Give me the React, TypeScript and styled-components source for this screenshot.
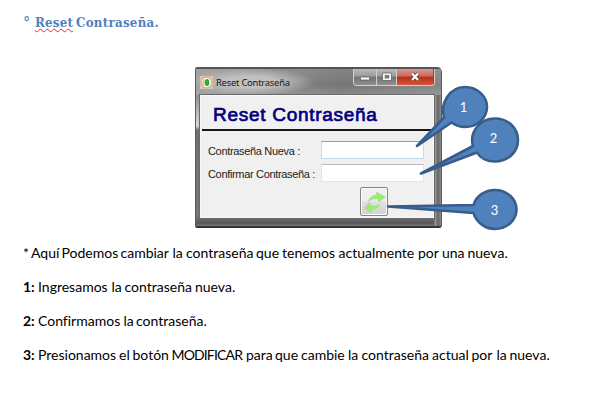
import React from "react";
import styled, { createGlobalStyle } from "styled-components";

const GlobalStyle = createGlobalStyle`
  * { box-sizing: border-box; }
  body { margin: 0; background: #fff; }
`;

const Page = styled.main`
  width: 597px;
  height: 415px;
  padding: 13px 0 0 23px;
  overflow: hidden;
  color: #000;
  font-family: Lato, "Liberation Sans", sans-serif;
`;

const Heading = styled.h1`
  display: flex;
  align-items: flex-start;
  height: 20px;
  margin: 0 0 34px;
  color: #4f81bd;
  font: bold 13.2px/19px "DejaVu Serif Condensed", "DejaVu Serif", serif;
  white-space: nowrap;
`;

const Degree = styled.span`
  width: 12px;
  font-size: 16px;
  font-weight: normal;
  line-height: 20px;
`;

const Misspelled = styled.span`
  width: 41px;
  height: 17px;
  letter-spacing: 0.2px;
  text-decoration: underline wavy #ff2020 1px;
  text-underline-offset: 1px;
  text-decoration-skip-ink: none;
`;

const HeadingRest = styled.span`
  letter-spacing: 0.25px;
`;

const Figure = styled.figure`
  position: relative;
  width: 330px;
  height: 172px;
  margin: 0 0 0 172px;
`;

const Window = styled.section`
  display: flex;
  flex-direction: column;
  width: 247px;
  height: 161px;
  padding: 0 7px 8px 4px;
  border: 1px solid #5c5c5c;
  border-top: 2px solid #555;
  border-bottom: 2px solid #333;
  border-radius: 2px 5px 3px 2px;
  background:
    linear-gradient(90deg, rgba(255, 255, 255, 0) 0 238px, #999 239px, #666 242px, #8b8b8b 245px) 0 0 / 100% 100%,
    linear-gradient(#858585 0, #777 14px, #8d8d8d 25px, #c5c5c5 48px, #d7d7d7 57px, #707070 61px, #777 147px, #575757 154px, #777 157px);
  font-family: "Liberation Sans", Arial, sans-serif;
`;

const TitleBar = styled.header`
  display: flex;
  height: 26px;
  flex: none;
  margin: 0 -7px 0 -4px;
  padding: 0 6px 0 4px;
  background:
    radial-gradient(ellipse 66px 14px at 54px 13px, rgba(195, 195, 195, 0.95) 40%, rgba(160, 160, 160, 0) 100%),
    linear-gradient(rgba(255, 255, 255, 0.1), rgba(0, 0, 0, 0) 60%, rgba(255, 255, 255, 0.15)),
    linear-gradient(90deg, #999, #757575 60%, #858585);
`;

const AppIcon = styled.svg`
  width: 13px;
  height: 13px;
  margin-top: 7px;
`;

const WindowName = styled.span`
  margin: 7px auto 0 3px;
  color: #171717;
  font: 9.4px/13px "Noto Sans", sans-serif;
  letter-spacing: -0.22px;
  white-space: nowrap;
`;

const Controls = styled.div`
  display: flex;
  width: 82px;
  height: 17px;
  border: 1px solid #d0d0d0;
  border-top: 0;
  border-radius: 0 0 4px 4px;
  overflow: hidden;
`;

const Control = styled.span<{ $width: number; $danger?: boolean }>`
  display: grid;
  place-items: center;
  width: ${(p) => p.$width}px;
  border-right: 1px solid ${(p) => (p.$danger ? "#8c4034" : "#cfcfcf")};
  background: ${(p) =>
    p.$danger
      ? "linear-gradient(#d29a90 0, #ca6c5c 45%, #b92d17 50%, #d4573c 100%)"
      : "linear-gradient(#b9b9b9 0, #9c9c9c 45%, #717171 50%, #919191 100%)"};
`;

const Glyph = styled.svg`
  width: 14px;
  height: 12px;
`;

const Client = styled.div`
  flex: 1;
  border: 1px solid #fafafa;
  outline: 1px solid #696969;
  background: #f0f0f0;
`;

const FormTitle = styled.h2`
  height: 35px;
  margin: 0 0 0 1px;
  padding: 7px 0 0 11px;
  border-bottom: 2px solid #19161b;
  color: #000080;
  font-size: 19px;
  font-weight: normal;
  -webkit-text-stroke: 0.7px #000080;
  line-height: 24px;
  letter-spacing: 0.72px;
  white-space: nowrap;
`;

const Form = styled.div`
  display: grid;
  grid-template-columns: 113px 103px;
  grid-template-rows: 18px 18px 28px;
  row-gap: 5px;
  padding: 10px 0 0 7px;
`;

const Label = styled.label`
  color: #222;
  font-size: 11px;
  line-height: 20px;
  letter-spacing: -0.33px;
  white-space: nowrap;
`;

const Field = styled.input<{ $active?: boolean }>`
  width: 103px;
  height: 18px;
  border: 1px solid ${(p) => (p.$active ? "#bddcf0" : "#e2e3ea")};
  border-top-color: ${(p) => (p.$active ? "#75a9d0" : "#b7b8be")};
  border-radius: 1px;
  background: #fff;
`;

const ModifyButton = styled.button`
  grid-column: 2;
  width: 28px;
  height: 29px;
  margin: 0 0 0 39px;
  padding: 1px;
  border: 1px solid #858585;
  border-radius: 2px;
  background: linear-gradient(#f0f0f0 45%, #e0e0e0 52%, #d2d2d2);
  box-shadow: inset 0 0 0 1px #fafafa;
`;

const ArrowsIcon = styled.svg`
  display: block;
  width: 24px;
  height: 24px;
`;

const Callouts = styled.svg`
  position: absolute;
  top: 0;
  left: 0;
  width: 330px;
  height: 172px;
  overflow: visible;
  fill: #4f81bd;
  stroke: #385d8a;
  stroke-width: 2.6;
  stroke-linejoin: round;
`;

const CalloutNumber = styled.text`
  fill: #fff;
  stroke: none;
  font: 13px Lato, sans-serif;
  text-anchor: middle;
`;

const Notes = styled.div`
  display: flex;
  flex-direction: column;
  gap: 14px;
  margin-top: 4px;
`;

const Note = styled.p`
  display: flex;
  margin: 0;
  font-size: 14px;
  line-height: 20px;
  font-variant-ligatures: none;
  white-space: pre;
`;

const Word = styled.span<{ $advance: number; $strong?: boolean; $tight?: boolean }>`
  flex: none;
  width: ${(p) => p.$advance}px;
  font-weight: ${(p) => (p.$strong ? "bold" : "normal")};
  letter-spacing: ${(p) => (p.$tight ? "-0.85px" : "0")};
`;

const callouts = [
  { n: 1, x: 463.5, y: 112, d: "M417 146 L444 117.5 C440 104 449 87 465 87 C477 87 487 96 487 107 C487 118 477 127 465 127 C460 127 455 125 451.5 122.5 Z" },
  { n: 2, x: 493.5, y: 143, d: "M421 173.5 L473 146 C469 132 480 118.5 495 118.5 C508 118.5 518 128 518 140 C518 152 508 161.5 495 161.5 C487 161.5 480 158 477 152.5 Z" },
  { n: 3, x: 494.5, y: 215, d: "M388 206.5 L473.5 205 C476 196 485 190 495 190 C507 190 516.5 199 516.5 209.5 C516.5 220 507 229 495 229 C485 229 476 222 473.5 213 Z" },
];

type NoteWord = [text: string, advance: number];

const notes: NoteWord[][] = [
  [["*", 8], ["Aquí ", 30.5], ["Podemos ", 59], ["cambiar ", 52], ["la ", 13.5], ["contraseña ", 70], ["que ", 26], ["tenemos ", 56.5], ["actualmente ", 79.5], ["por ", 24], ["una ", 25.5], ["nueva.", 44]],
  [["1: ", 15], ["Ingresamos ", 73.5], ["la ", 13], ["contraseña ", 70.5], ["nueva.", 44]],
  [["2: ", 15], ["Confirmamos ", 85.5], ["la ", 12.5], ["contraseña.", 74]],
  [["3: ", 15], ["Presionamos ", 81], ["el ", 13.5], ["botón ", 39], ["MODIFICAR ", 74.5], ["para ", 29], ["que ", 26], ["cambie ", 47], ["la ", 13.5], ["contraseña ", 70.5], ["actual ", 39.5], ["por ", 25], ["la ", 13], ["nueva.", 44]],
];

export default function App() {
  return (
    <Page>
      <GlobalStyle />
      <Heading>
        <Degree>°</Degree>
        <Misspelled>Reset</Misspelled>
        <HeadingRest>Contraseña.</HeadingRest>
      </Heading>
      <Figure>
        <Window>
          <TitleBar>
            <AppIcon viewBox="0 0 13 13">
              <rect width="13" height="13" fill="#cfcac2" />
              <circle cx="6.5" cy="6.5" r="5.5" fill="#f8f5e9" stroke="#eca273" strokeWidth="1.3" />
              <path d="M4 3.4 Q2.6 6.5 4 9.6" fill="none" stroke="#9fd08f" strokeWidth="1.3" />
              <ellipse cx="7" cy="6.5" rx="2.3" ry="3.5" fill="#36a637" />
            </AppIcon>
            <WindowName>Reset Contraseña</WindowName>
            <Controls>
              <Control $width={23}>
                <Glyph viewBox="0 0 14 12"><rect x="2.5" y="6" width="9" height="3" rx=".5" fill="#fff" stroke="#555" strokeWidth=".7" /></Glyph>
              </Control>
              <Control $width={21}>
                <Glyph viewBox="0 0 14 12">
                  <rect x="2.5" y="2" width="9" height="7.5" rx=".5" fill="#f5f5f5" stroke="#555" strokeWidth=".7" />
                  <rect x="5.2" y="4.5" width="3.6" height="2.5" fill="#888" stroke="#555" strokeWidth=".7" />
                </Glyph>
              </Control>
              <Control $width={37} $danger>
                <Glyph viewBox="0 0 14 12">
                  <path d="M4 2.5 L10 9 M10 2.5 L4 9" stroke="#664449" strokeWidth="3.6" />
                  <path d="M4 2.5 L10 9 M10 2.5 L4 9" stroke="#fff" strokeWidth="2.1" />
                </Glyph>
              </Control>
            </Controls>
          </TitleBar>
          <Client>
            <FormTitle>Reset Contraseña</FormTitle>
            <Form>
              <Label htmlFor="nueva">Contraseña Nueva :</Label>
              <Field id="nueva" type="password" $active />
              <Label htmlFor="confirmar">Confirmar Contraseña :</Label>
              <Field id="confirmar" type="password" />
              <ModifyButton aria-label="Modificar">
                <ArrowsIcon viewBox="0 0 24 24" fill="#8ff560" stroke="#b4c8aa" strokeWidth=".6">
                  <path d="M6.5 11 Q8 5.2 15 5.2 L14.5 2 L23.5 7 L16.5 12 L16 8.8 Q10.5 8 6.5 11 Z" />
                  <path d="M18 14.5 Q15.500 19.800 9 19.300 L9.500 22.500 L2.500 18 L8 12.500 L8.500 15.800 Q13.500 17 18 14.500 Z" />
                </ArrowsIcon>
              </ModifyButton>
            </Form>
          </Client>
        </Window>
        <Callouts viewBox="195 67 330 172">
          {callouts.map((c) => (
            <g key={c.n}>
              <path d={c.d} />
              <CalloutNumber x={c.x} y={c.y}>{c.n}</CalloutNumber>
            </g>
          ))}
        </Callouts>
      </Figure>
      <Notes>
        {notes.map((words, row) => (
          <Note key={row}>
            {words.map(([text, advance], i) => (
              <Word key={i} $advance={advance} $strong={text.includes(":")} $tight={text.startsWith("MODIFICAR")}>
                {text}
              </Word>
            ))}
          </Note>
        ))}
      </Notes>
    </Page>
  );
}
